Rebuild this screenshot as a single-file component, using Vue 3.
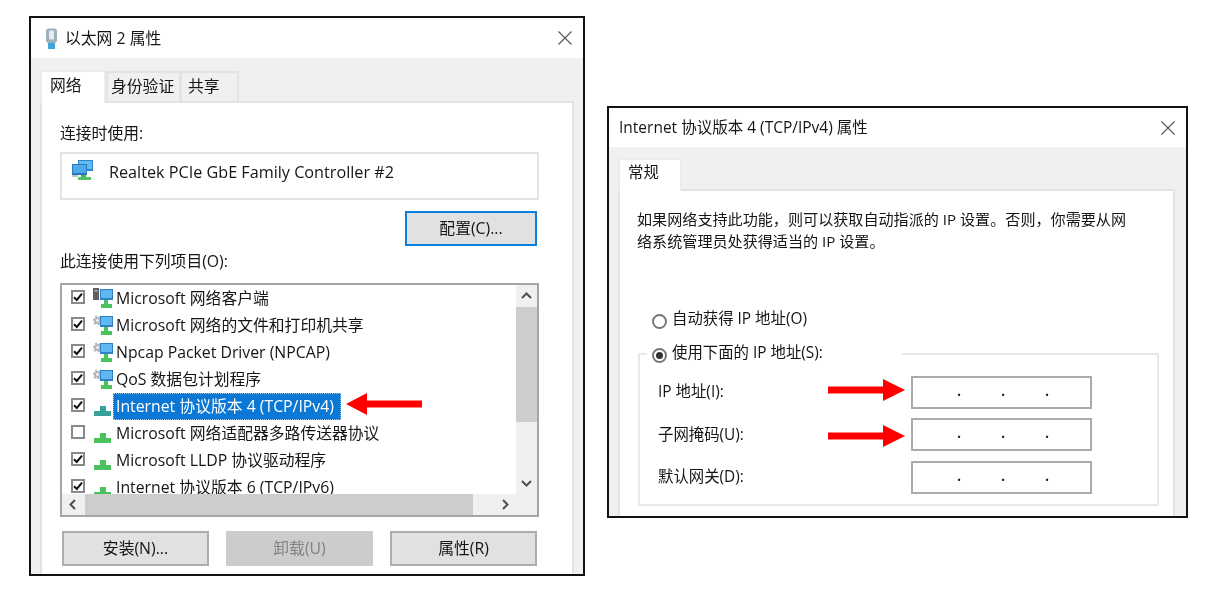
<script setup>
const rows = [
  { checked: true, icon: 'client', text: 'Microsoft 网络客户端' },
  { checked: true, icon: 'service', text: 'Microsoft 网络的文件和打印机共享' },
  { checked: true, icon: 'service', text: 'Npcap Packet Driver (NPCAP)' },
  { checked: true, icon: 'service', text: 'QoS 数据包计划程序' },
  { checked: true, icon: 'proto', text: 'Internet 协议版本 4 (TCP/IPv4)', selected: true },
  { checked: false, icon: 'proto', text: 'Microsoft 网络适配器多路传送器协议' },
  { checked: true, icon: 'proto', text: 'Microsoft LLDP 协议驱动程序' },
  { checked: true, icon: 'proto', text: 'Internet 协议版本 6 (TCP/IPv6)' },
]
const ipRows = ['IP 地址(I):', '子网掩码(U):', '默认网关(D):']
</script>

<template>
  <div class="page">
    <section class="win win-a">
      <header class="title title-a">
        <svg class="plug" width="13" height="21" viewBox="0 0 13 21">
          <path d="M1 3Q1 0.5 3.500 0.5H9.500Q12 0.5 12 3V13L10 15.500H3L1 13Z" fill="#9fb0bd" />
          <rect x="4" y="2.500" width="5" height="9" rx="1" fill="#e6edf2" />
          <rect x="3" y="15" width="7" height="6" fill="#3fa6dc" />
        </svg>
        <span class="title-text">以太网 2 属性</span>
        <svg class="close" width="14" height="14" viewBox="0 0 14 14"><path d="M0.5 0.5L13.500 13.500M13.500 0.5L0.5 13.500" stroke="#555" stroke-width="1.1" fill="none" /></svg>
      </header>
      <nav class="tabs">
        <div class="tab active">网络</div>
        <div class="tab t2">身份验证</div>
        <div class="tab t3">共享</div>
      </nav>
      <div class="panel panel-a">
        <div class="label">连接时使用:</div>
        <div class="adapter">
          <svg width="22" height="20" viewBox="0 0 22 20">
            <rect x="6" y="0" width="15" height="11" fill="#2f86cf" />
            <rect x="7" y="1" width="13" height="8" fill="#62bcf2" />
            <rect x="0" y="4" width="15" height="11" fill="#2a78bd" />
            <rect x="1" y="5" width="13" height="8" fill="#4eaaea" />
            <rect x="9" y="15" width="5" height="2" fill="#41b85a" />
            <rect x="6" y="17" width="13" height="3" fill="#52c468" />
            <rect x="0" y="15" width="6" height="2" fill="#c4c4c4" />
          </svg>
          <span class="adapter-name">Realtek PCIe GbE Family Controller #2</span>
        </div>
        <button class="btn config">配置(C)...</button>
        <div class="label second">此连接使用下列项目(O):</div>
        <div class="list">
          <div class="viewport">
            <div v-for="r in rows" :key="r.text" class="row">
              <span class="check">
                <svg v-if="r.checked" width="10" height="10" viewBox="0 0 10 10"><path d="M1 5.200L3.800 8L9 1.600" stroke="#111" stroke-width="2" fill="none" /></svg>
              </span>
              <svg class="item-icon" width="20" height="21" viewBox="0 0 20 21">
                <template v-if="r.icon === 'client'">
                  <rect x="0" y="1" width="6" height="12" fill="#5f5f5f" />
                  <rect x="1.500" y="3" width="3" height="1.500" fill="#bbb" />
                  <rect x="7" y="2" width="13" height="11" fill="#2f80c8" />
                  <rect x="8" y="3" width="11" height="8" fill="#5fb9f0" />
                </template>
                <template v-if="r.icon === 'service'">
                  <circle cx="4.500" cy="6.500" r="3.600" fill="#b4b8bb" />
                  <circle cx="4.500" cy="6.500" r="4" fill="none" stroke="#b4b8bb" stroke-width="2" stroke-dasharray="2 2" />
                  <circle cx="4.500" cy="6.500" r="1.400" fill="#f0f0f0" />
                  <rect x="7" y="2" width="13" height="11" fill="#2f80c8" />
                  <rect x="8" y="3" width="11" height="8" fill="#5fb9f0" />
                </template>
                <path v-if="r.icon === 'proto'" d="M7 11H13V16H18V21H1V16H7Z" :fill="r.selected ? '#35a39a' : '#4cc25f'" />
                <path v-else d="M11 13H15V17H19V21H8V17H11Z" fill="#4cc25f" />
              </svg>
              <span class="row-text" :class="{ selected: r.selected }">{{ r.text }}</span>
            </div>
          </div>
          <div class="vbar">
            <svg width="21" height="21" viewBox="0 0 21 21"><path d="M6 13L10.500 8.500L15 13" stroke="#505050" stroke-width="2" fill="none" /></svg>
            <div class="vtrack"><div class="vthumb"></div></div>
            <svg width="21" height="21" viewBox="0 0 21 21"><path d="M6 8L10.500 12.500L15 8" stroke="#505050" stroke-width="2" fill="none" /></svg>
          </div>
          <div class="hbar">
            <svg width="21" height="21" viewBox="0 0 21 21"><path d="M13 6L8.500 10.500L13 15" stroke="#505050" stroke-width="2" fill="none" /></svg>
            <div class="hthumb"></div>
            <svg width="21" height="21" viewBox="0 0 21 21"><path d="M8 6L12.500 10.500L8 15" stroke="#505050" stroke-width="2" fill="none" /></svg>
          </div>
          <div class="corner"></div>
        </div>
        <div class="actions">
          <button class="btn action">安装(N)...</button>
          <button class="btn action disabled">卸载(U)</button>
          <button class="btn action">属性(R)</button>
        </div>
      </div>
      <svg class="arrow arrow-list" width="76" height="22" viewBox="0 0 76 22"><path d="M76 7.500H21V0L0 11L21 22V14.500H76Z" fill="#f00" /></svg>
    </section>

    <section class="win win-b">
      <header class="title title-b">
        <span class="title-text">Internet 协议版本 4 (TCP/IPv4) 属性</span>
        <svg class="close" width="14" height="14" viewBox="0 0 14 14"><path d="M0.5 0.5L13.500 13.500M13.500 0.5L0.5 13.500" stroke="#555" stroke-width="1.1" fill="none" /></svg>
      </header>
      <nav class="tabs tabs-b">
        <div class="tab active">常规</div>
      </nav>
      <div class="panel panel-b">
        <p class="intro">如果网络支持此功能，则可以获取自动指派的 IP 设置。否则，你需要从网<br />络系统管理员处获得适当的 IP 设置。</p>
        <div class="radio-row auto"><span class="radio"></span>自动获得 IP 地址(O)</div>
        <fieldset class="group">
          <legend class="radio-row"><span class="radio on"></span>使用下面的 IP 地址(S):</legend>
          <div v-for="l in ipRows" :key="l" class="ip-row">
            <span class="ip-label">{{ l }}</span>
            <div class="ip"><i>.</i><i>.</i><i>.</i></div>
          </div>
        </fieldset>
      </div>
      <svg class="arrow arrow-ip1" width="77" height="22" viewBox="0 0 77 22"><path d="M0 7.500H55V0L77 11L55 22V14.500H0Z" fill="#f00" /></svg>
      <svg class="arrow arrow-ip2" width="77" height="22" viewBox="0 0 77 22"><path d="M0 7.500H55V0L77 11L55 22V14.500H0Z" fill="#f00" /></svg>
    </section>
  </div>
</template>

<style scoped>
.page {
  display: flex;
  align-items: flex-start;
  width: 1217px;
  height: 597px;
  overflow: hidden;
  background: #fff;
  font-family: "Open Sans", "Noto Sans CJK SC", sans-serif;
  color: #151515;
}
.win {
  position: relative;
  display: flex;
  flex-direction: column;
  flex: none;
  box-sizing: border-box;
  border: 2px solid #111;
  background: #f0f0f0;
  overflow: hidden;
  filter: blur(0.5px);
}
.win-a { width: 556px; height: 560px; margin: 16px 0 0 29px; font-size: 15.8px; }
.win-b { width: 581px; height: 412px; margin: 106px 0 0 22px; font-size: 15.4px; }
.title {
  display: flex;
  align-items: center;
  flex: none;
  background: #fff;
  padding: 0 11px 0 14px;
}
.title-a { height: 40px; }
.title-b { height: 39px; padding-left: 10px; font-size: 15.5px; }
.title-text { flex: 1; line-height: 20px; }
.title-a .title-text { margin-top: -1px; }
.title-b .title-text { margin-top: -2px; }
.plug { margin-right: 7px; }
.tabs {
  display: flex;
  align-items: flex-end;
  flex: none;
  height: 31px;
  margin: 12px 0 0 9px;
  position: relative;
  z-index: 1;
}
.tabs-b { margin-top: 11px; }
.tab {
  box-sizing: border-box;
  height: 30px;
  line-height: 26px;
  border: 2px solid #e3e3e3;
  border-bottom: 0;
  margin-left: -1px;
  white-space: nowrap;
}
.tab.active {
  width: 66px;
  height: 33px;
  line-height: 26px;
  margin: 0 0 -2px;
  padding: 0 0 3px 8px;
  background: #fff;
  border-color: #ececec;
}
.tabs-b .tab.active { width: 64px; line-height: 25px; }
.t2 { width: 75px; margin-left: 0; padding-left: 3px; }
.t3 { width: 59px; padding-left: 6px; }
.panel {
  flex: 1;
  display: flex;
  flex-direction: column;
  min-height: 0;
  background: #fff;
  border: 2px solid #e3e3e3;
  border-bottom: 0;
}
.panel-a { margin: 0 9px; padding: 20px 33px 0 18px; }
.panel-b { margin: 0 11px 0 9px; padding: 17px 0 0 17px; }
.label { line-height: 20px; }
.adapter {
  display: flex;
  align-items: flex-start;
  box-sizing: border-box;
  height: 48px;
  margin-top: 9px;
  padding: 5px 0 0 10px;
  border: 2px solid #e3e3e3;
  line-height: 24px;
}
.adapter svg { margin-right: 15px; margin-top: 1px; }
.adapter-name { font-size: 16.2px; margin-top: 1px; }
.btn {
  box-sizing: border-box;
  height: 35px;
  padding: 0 0 3px;
  border: 2px solid #adadad;
  background: #e1e1e1;
  color: #151515;
  font: inherit;
}
.config {
  align-self: flex-end;
  width: 132px;
  margin: 11px 2px 0 0;
  border-color: #0a7fdc;
}
.second { margin-top: 5px; }
.list {
  display: grid;
  grid-template-columns: 1fr 21px;
  grid-template-rows: 1fr 21px;
  box-sizing: border-box;
  height: 234px;
  margin-top: 12px;
  border: 2px solid #a5a5a5;
  background: #fff;
}
.viewport { overflow: hidden; min-height: 0; }
.row {
  display: flex;
  align-items: center;
  height: 27px;
  padding-left: 9px;
}
.check {
  display: flex;
  align-items: center;
  justify-content: center;
  flex: none;
  box-sizing: border-box;
  width: 14px;
  height: 14px;
  margin-top: -3px;
  border: 2px solid #8a8a8a;
  background: #fff;
}
.item-icon { flex: none; margin: -2px 0 0 8px; }
.row-text {
  align-self: stretch;
  padding: 0 3px;
  line-height: 26px;
  white-space: nowrap;
}
.row-text.selected {
  padding-right: 7px;
  background: #0a78d4;
  color: #fff;
  outline: 1px dotted #9ac5ea;
  outline-offset: -1px;
}
.vbar {
  display: flex;
  flex-direction: column;
  background: #f0f0f0;
}
.vtrack { flex: 1; padding-top: 1px; }
.vthumb { height: 115px; background: #cdcdcd; }
.hbar {
  display: flex;
  background: #f0f0f0;
}
.hthumb { width: 388px; background: #cdcdcd; margin-left: 2px; }
.hbar svg:last-child { margin-left: auto; }
.corner { background: #f0f0f0; }
.actions {
  display: flex;
  justify-content: space-between;
  margin: 14px 2px 0;
}
.action { width: 147px; }
.action.disabled {
  background: #ccc;
  border-color: #ccc;
  color: #838383;
}
.arrow { position: absolute; }
.arrow-list { left: 315px; top: 375px; }
.arrow-ip1 { left: 219px; top: 271px; }
.arrow-ip2 { left: 219px; top: 317px; }
.intro { margin: 0; line-height: 22px; font-size: 15.1px; }
.radio-row {
  display: flex;
  align-items: center;
  line-height: 20px;
}
.auto { margin: 57px 0 14px 15px; }
.radio {
  display: flex;
  align-items: center;
  justify-content: center;
  flex: none;
  box-sizing: border-box;
  width: 15px;
  height: 15px;
  margin-right: 5px;
  margin-top: 4px;
  border: 2px solid #777;
  border-radius: 50%;
  background: #fff;
}
.radio.on::after {
  content: "";
  width: 7px;
  height: 7px;
  border-radius: 50%;
  background: #333;
}
.group {
  box-sizing: border-box;
  width: 521px;
  margin: 0 0 0 1px;
  padding: 1px 0 10px 18px;
  border: 2px solid #e8e8e8;
}
.group legend {
  margin-left: -11px;
  padding: 0 79px 2px 5px;
}
.ip-row {
  display: flex;
  align-items: center;
  height: 33px;
  margin-top: 9.5px;
}
.ip-label { width: 253px; margin-bottom: 3px; }
.ip {
  display: grid;
  grid-template-columns: repeat(3, 44px);
  box-sizing: border-box;
  width: 181px;
  height: 33px;
  padding-left: 24px;
  border: 2px solid #ababab;
  line-height: 25px;
  text-align: center;
}
.ip i { font-style: normal; font-weight: 600; }
</style>

<style>
html, body { margin: 0; background: #fff; }
</style>
